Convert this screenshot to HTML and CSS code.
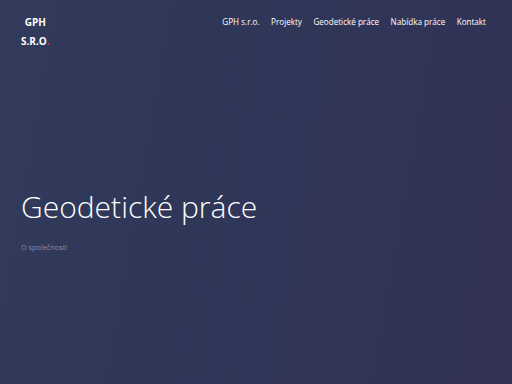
FILE: index.html
```html
<!DOCTYPE html>
<html lang="cs">
<head>
<meta charset="utf-8">
<link rel="stylesheet" href="styles.css">
</head>
<body>
<div class="hero">
  <header class="header">
    <a class="logo" href="#"><span>GPH</span><span>S.R.O<span class="dot">.</span></span></a>
    <nav class="nav">
      <a href="#">GPH s.r.o.</a>
      <a href="#">Projekty</a>
      <a href="#">Geodetické práce</a>
      <a href="#">Nabídka práce</a>
      <a href="#">Kontakt</a>
    </nav>
  </header>
  <main class="content">
    <h1 class="title">Geodetické práce</h1>
    <p class="crumb">O společnosti</p>
  </main>
</div>
</body>
</html>
```
FILE: styles.css
```css
html, body {
  margin: 0;
  padding: 0;
}
body {
  font-family: "Open Sans", "Liberation Sans", sans-serif;
  background: #30375a;
}
.hero {
  width: 512px;
  height: 384px;
  background: linear-gradient(100deg, #323b5c 0%, #2f3759 40%, #323255 100%);
  color: #fff;
  display: flex;
  flex-direction: column;
}
.header {
  display: flex;
  justify-content: space-between;
  align-items: flex-start;
  padding: 13px 26px 0 21px;
}
.logo {
  display: flex;
  flex-direction: column;
  align-items: center;
  color: #fff;
  text-decoration: none;
  font-weight: 700;
  font-size: 10px;
  line-height: 19px;
}
.dot {
  color: #e0304a;
}
.nav {
  display: flex;
  gap: 11.5px;
  padding-top: 2px;
}
.nav a {
  color: #fff;
  text-decoration: none;
  font-size: 8.1px;
  font-weight: 500;
  line-height: 14px;
}
.content {
  padding: 0 21px;
  margin-top: 136px;
}
.title {
  margin: 0;
  font-weight: 300;
  font-size: 30px;
  line-height: 40px;
}
.crumb {
  margin: 15px 0 0;
  font-size: 7.3px;
  color: #878da8;
}
```
